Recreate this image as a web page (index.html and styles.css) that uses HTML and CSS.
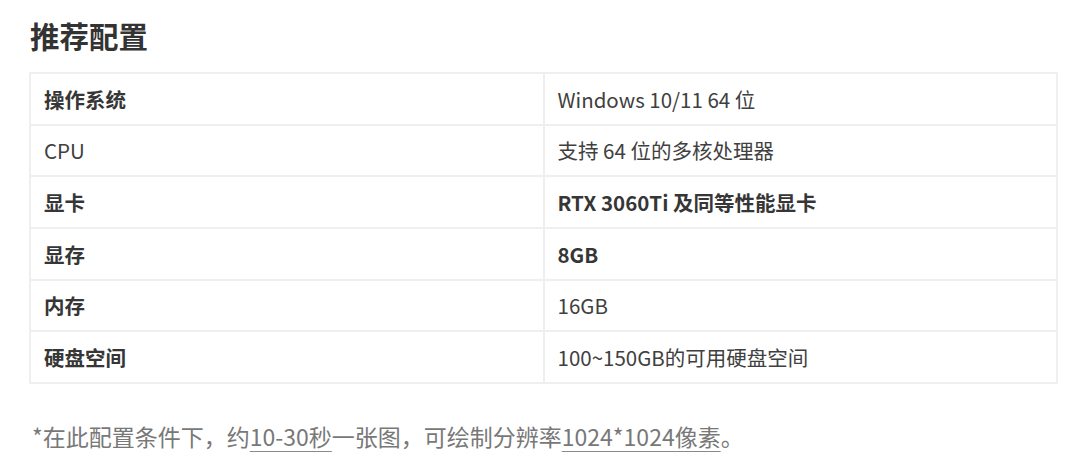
FILE: index.html
```html
<!DOCTYPE html>
<html lang="zh-CN">
<head>
<meta charset="utf-8">
<link rel="stylesheet" href="styles.css">
</head>
<body>
<main class="page">
  <h2 class="title">推荐配置</h2>
  <table class="spec">
    <tbody>
      <tr><td class="b">操作系统</td><td>Windows 10/11 64 位</td></tr>
      <tr><td>CPU</td><td>支持 64 位的多核处理器</td></tr>
      <tr><td class="b">显卡</td><td class="b">RTX 3060Ti 及同等性能显卡</td></tr>
      <tr><td class="b">显存</td><td class="b">8GB</td></tr>
      <tr><td class="b">内存</td><td>16GB</td></tr>
      <tr><td class="b">硬盘空间</td><td>100~150GB的可用硬盘空间</td></tr>
    </tbody>
  </table>
  <p class="note">*在此配置条件下，约<span class="u">10-30秒</span>一张图，可绘制分辨率<span class="u">1024*1024像素</span>。</p>
</main>
</body>
</html>
```
FILE: styles.css
```css
html, body {
  margin: 0;
  padding: 0;
  background: #ffffff;
}
body {
  font-family: "Noto Sans CJK SC", "Noto Sans", sans-serif;
  color: #333;
}
.page {
  padding: 16px 22px 0 29px;
}
.title {
  margin: 0 0 0 1px;
  font-size: 29.5px;
  line-height: 38px;
  font-weight: 700;
  color: #333;
}
.spec {
  margin-top: 18px;
  width: 1029px;
  border-collapse: collapse;
  table-layout: fixed;
  border: 2px solid #efefef;
}
.spec td {
  border: 2px solid #efefef;
  height: 49.67px;
  padding: 0 0 0 13px;
  font-size: 20.5px;
  line-height: 26px;
  color: #404040;
  vertical-align: middle;
}
.spec td.b {
  font-weight: 700;
  color: #363636;
}
.note {
  margin: 36px 0 0 3px;
  font-size: 23px;
  line-height: 32px;
  color: #787878;
}
.u {
  text-decoration: underline;
  text-decoration-color: #8a8a8a;
  text-underline-offset: 5px;
  text-decoration-thickness: 2px;
}
```
